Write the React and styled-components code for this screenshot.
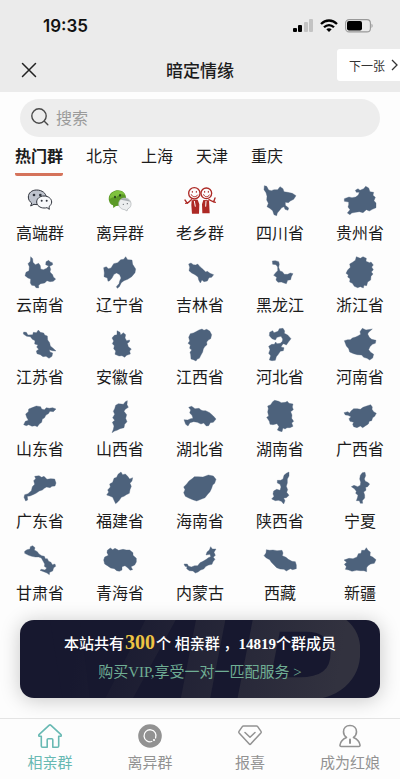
import React from 'react';
import styled, { createGlobalStyle } from 'styled-components';

const GlobalStyle = createGlobalStyle`
  * { box-sizing: border-box; }
  body {
    margin: 0;
    background: #fff;
    font-family: "Noto Sans CJK SC", sans-serif;
    color: #1c1c1c;
  }
  button, input { font: inherit; color: inherit; }
  button { border: 0; padding: 0; background: none; cursor: pointer; }
  svg { display: block; flex: none; }
`;

const Page = styled.div`
  margin-right: 6px;
  min-height: 100vh;
  display: flex;
  flex-direction: column;
  background: #fdfdfd;
`;

const Header = styled.header`
  background: #ebebeb;
`;

const StatusBar = styled.div`
  display: flex;
  align-items: center;
  justify-content: space-between;
  height: 48px;
  padding: 4px 27px 0 43px;
`;

const Clock = styled.time`
  font: 600 17px/24px Inter, sans-serif;
  color: #111;
`;

const StatusIcons = styled.div`
  display: flex;
  align-items: center;
  gap: 7px;
`;

const TitleBar = styled.div`
  display: grid;
  grid-template-columns: 1fr auto 1fr;
  align-items: center;
  height: 44px;
`;

const CloseButton = styled.button`
  justify-self: start;
  padding: 0 20px;
`;

const Title = styled.h1`
  margin: 0;
  font-size: 17px;
  line-height: 24px;
  font-weight: 500;
`;

const NextButton = styled.button`
  display: flex;
  align-items: center;
  justify-content: space-between;
  justify-self: end;
  align-self: start;
  width: 63px;
  height: 32px;
  margin-top: 1px;
  padding: 0 1px 0 12px;
  border-radius: 3px 0 0 3px;
  background: #fff;
  font-size: 12px;
  color: #333;
`;

const Main = styled.main`
  flex: 1;
  padding-top: 7px;
`;

const SearchBox = styled.label`
  display: flex;
  align-items: center;
  gap: 7px;
  height: 38px;
  margin: 0 20px;
  padding: 0 11px 2px;
  border-radius: 19px;
  background: #ededed;
`;

const SearchInput = styled.input`
  flex: 1;
  min-width: 0;
  border: 0;
  padding: 0;
  outline: 0;
  background: none;
  font-size: 16px;
  line-height: 24px;
  &::placeholder { color: #9b9b9b; opacity: 1; }
`;

const Tabs = styled.div`
  display: flex;
  gap: 23px;
  margin-top: 6px;
  padding: 0 15px;
`;

const Tab = styled.button`
  padding-bottom: 6px;
  border-bottom: 3px solid ${(p) => (p.$active ? '#d5735b' : 'transparent')};
  border-radius: 2px;
  font-size: 16px;
  line-height: 24px;
  font-weight: ${(p) => (p.$active ? 700 : 400)};
`;

const Grid = styled.div`
  display: grid;
  grid-template-columns: repeat(5, 1fr);
  row-gap: 12px;
  margin-top: 8px;
`;

const Group = styled.a`
  display: flex;
  flex-direction: column;
  align-items: center;
  gap: 4px;
  color: inherit;
  text-decoration: none;
  font-size: 16px;
  line-height: 24px;
`;

const Banner = styled.a`
  position: relative;
  display: flex;
  flex-direction: column;
  align-items: center;
  margin: 16px 20px 20px;
  padding: 10px 0 12px;
  border-radius: 14px;
  background: #17182f;
  box-shadow: 0 2px 20px rgba(0, 0, 0, 0.22);
  overflow: hidden;
  color: #fff;
  text-decoration: none;
  font-family: "Liberation Serif", "Noto Sans CJK SC", serif;
  font-size: 15px;
`;

const Watermark = styled.span`
  position: absolute;
  right: 20px;
  top: -16px;
  font: italic 700 204px/150px "Liberation Sans", sans-serif;
  background: linear-gradient(100deg, #17182f 15%, #32323f 90%);
  background-clip: text;
  color: transparent;
  pointer-events: none;
`;

const BannerLine = styled.span`
  position: relative;
  line-height: 28px;
  font-weight: 500;
  white-space: pre;
`;

const Count = styled.strong`
  padding: 0 1px;
  font-size: 20px;
  line-height: 20px;
  color: #edc443;
`;

const BannerLink = styled.span`
  position: relative;
  line-height: 28px;
  color: #6fae94;
`;

const BottomNav = styled.nav`
  display: grid;
  grid-template-columns: repeat(4, 1fr);
  padding: 5px 0 7px;
  border-top: 1px solid #e4e4e4;
`;

const NavItem = styled.a`
  display: flex;
  flex-direction: column;
  align-items: center;
  gap: 4px;
  font-size: 15px;
  line-height: 20px;
  text-decoration: none;
  color: ${(p) => (p.$active ? '#68b9b3' : '#929292')};
`;

const provinces = [
  ['四川省', '183 27', '184,32 191,34 197,45 205,47 213,44 224,44 231,35 240,41 243,50 254,52 268,55 279,62 272,73 262,78 256,83 247,82 247,91 257,99 255,106 246,103 243,95 236,98 230,106 223,114 221,122 213,119 209,107 200,100 192,95 196,85 191,75 192,64 189,53 183,44'],
  ['贵州省', '423 27', '457,46 465,41 471,46 482,41 488,34 497,39 501,50 512,52 510,61 517,67 513,77 519,84 519,98 508,103 499,108 490,104 480,113 469,110 458,112 446,114 441,119 433,114 441,104 435,96 437,89 437,81 424,79 424,71 438,66 447,68 458,66 466,60 469,52 460,52'],
  ['云南省', '72 18', '92,20 98,26 99,37 106,44 116,40 121,47 122,57 130,59 140,55 146,48 137,44 138,35 146,31 151,36 157,38 158,44 149,49 152,58 150,66 158,74 160,81 167,87 160,94 150,95 141,92 134,99 122,101 116,106 116,114 108,113 104,107 95,106 91,99 92,87 84,84 75,77 78,67 87,62 88,50 84,41 91,34'],
  ['辽宁省', '312 18', '377,20 383,29 396,30 398,43 407,57 405,68 395,80 383,88 372,92 364,98 358,110 352,115 349,110 357,101 359,93 363,84 359,74 350,69 342,73 336,84 329,92 324,94 322,84 312,80 313,69 311,53 319,50 325,56 333,54 341,41 353,38 362,29 371,28'],
  ['吉林省', '552 18', '566,42 573,39 580,44 587,45 593,42 600,50 609,58 617,66 622,64 630,70 641,74 635,82 627,83 622,93 612,95 606,90 601,99 596,90 594,81 585,74 575,69 567,62 569,52'],
  ['黑龙江', '183 18', '208,33 217,32 227,35 229,43 227,52 231,63 238,65 244,73 254,73 262,69 270,71 265,80 263,89 254,91 250,101 243,99 235,96 225,97 219,90 221,82 212,76 218,68 224,62 224,51 219,44 209,43'],
  ['浙江省', '423 18', '460,20 472,25 480,20 490,25 489,34 500,38 504,36 511,45 506,51 511,59 505,66 510,72 504,79 503,90 494,96 491,107 483,106 481,114 472,110 464,113 454,109 448,100 440,96 441,86 434,81 436,75 429,70 434,60 442,52 440,42 450,36 457,31'],
  ['江苏省', '72 234', '71,246 79,247 84,255 98,254 100,247 109,248 115,240 121,247 131,249 134,255 142,258 143,270 149,278 151,288 161,296 168,303 157,302 148,299 150,306 158,309 156,319 147,325 138,319 129,320 121,314 111,311 109,303 116,298 110,291 114,285 104,282 105,272 97,268 91,260 80,259 70,252'],
  ['安徽省', '312 234', '351,242 360,247 362,255 370,248 377,254 375,264 380,272 389,270 388,276 382,280 385,290 394,297 389,303 391,312 380,316 374,322 366,317 357,318 345,313 347,303 341,296 343,287 337,281 341,273 336,264 343,256 351,254'],
  ['江西省', '552 234', '566,262 571,251 580,249 586,246 597,240 606,237 612,241 620,238 629,243 635,254 632,266 626,269 620,276 621,284 614,290 610,297 608,306 603,315 598,325 592,327 588,333 580,329 573,327 572,314 570,307 575,300 569,295 571,285 564,280 569,273'],
  ['河北省', '183 234', '200,247 209,242 213,248 225,244 229,236 240,235 245,243 244,250 254,255 264,266 258,274 250,285 242,281 238,284 234,291 243,293 241,302 232,304 226,313 220,320 217,331 207,332 199,330 203,317 197,310 201,299 197,289 206,283 214,283 218,276 222,281 232,280 238,274 239,267 234,259 222,262 217,270 207,266 199,257'],
  ['河南省', '423 234', '478,235 489,240 508,237 497,247 494,252 499,262 506,268 519,271 517,280 508,283 501,290 497,299 503,307 512,313 509,324 500,330 492,325 482,322 476,315 463,314 452,311 440,306 437,296 430,288 424,272 434,269 442,269 448,264 458,261 466,257 473,253 471,245'],
  ['山东省', '72 15', '99,37 109,33 122,35 125,42 133,44 139,38 148,40 158,38 168,42 160,50 150,49 145,56 138,60 133,69 127,72 125,82 118,87 112,95 105,92 96,94 86,89 79,92 71,89 76,79 85,76 80,67 77,57 85,50 86,42'],
  ['山西省', '312 15', '376,20 382,17 381,29 385,37 376,43 372,49 380,59 377,70 381,80 374,88 372,98 360,101 351,106 344,108 336,113 340,103 342,93 337,82 344,76 338,68 344,58 340,49 344,41 347,31 355,26 364,27 370,28'],
  ['湖北省', '552 15', '566,37 575,34 585,41 597,40 603,45 609,47 617,47 629,53 640,63 648,72 640,82 631,83 626,92 619,93 611,84 603,87 592,82 581,80 570,83 564,93 557,88 552,74 563,75 572,71 579,70 576,61 569,54 572,45'],
  ['湖南省', '183 15', '209,20 215,16 227,19 235,23 247,22 253,19 258,25 270,27 268,36 271,44 263,50 267,60 266,70 272,79 266,84 270,94 261,98 252,98 246,102 240,99 237,110 229,108 223,105 228,95 222,86 210,89 201,88 199,79 191,67 197,63 194,51 196,41 194,33 203,29'],
  ['广西省', '423 15', '423,53 434,50 440,54 444,48 452,41 463,41 472,43 480,37 491,33 503,29 508,36 507,43 512,50 520,55 515,64 509,68 506,77 499,79 496,87 488,92 479,98 472,93 462,98 452,95 449,88 452,82 441,79 438,71 444,65 435,61 427,60'],
  ['广东省', '72 231', '117,242 125,247 132,244 141,253 152,251 164,252 168,264 165,273 156,274 150,278 140,276 133,280 127,285 118,288 108,295 99,299 90,303 82,304 83,315 77,318 72,307 74,299 84,296 94,287 97,275 104,268 101,257 107,251 104,244'],
  ['福建省', '312 231', '363,231 368,239 376,237 383,244 389,252 398,248 396,258 390,265 394,274 390,284 388,295 379,299 372,304 364,307 358,316 354,320 347,326 342,316 338,307 329,303 320,300 326,291 323,285 331,276 329,267 338,262 342,250 350,247 354,238'],
  ['海南省', '552 231', '594,245 609,246 625,240 640,243 648,253 644,265 638,270 635,280 630,290 622,299 615,308 605,312 590,318 578,314 566,309 556,304 551,293 555,284 551,276 560,267 567,258 578,250 583,245'],
  ['陕西省', '183 231', '258,231 258,243 253,252 253,264 250,274 254,284 251,292 258,301 250,308 242,309 246,317 242,327 235,319 226,316 217,317 206,312 213,304 210,297 212,288 221,283 231,286 234,276 231,268 223,264 223,256 233,256 240,252 243,241 250,235'],
  ['宁夏', '423 231', '478,233 486,232 488,242 484,252 487,259 494,262 500,267 494,275 488,277 489,286 482,291 485,300 485,309 478,317 479,325 472,325 469,317 460,317 463,309 465,301 458,295 460,289 454,281 445,275 453,271 464,275 472,271 473,262 470,252 472,241'],
  ['甘肃省', '72 27', '98,32 105,38 103,45 112,50 117,57 125,62 133,64 136,71 142,71 146,79 153,82 157,89 165,87 167,94 161,98 158,108 149,112 148,119 141,114 131,110 120,106 124,103 135,105 140,99 133,94 134,87 129,78 124,69 116,66 106,66 95,64 86,61 74,55 74,49 81,44 90,42 91,35'],
  ['青海省', '312 27', '322,46 331,39 338,44 345,40 356,46 369,43 379,45 389,45 399,53 399,61 409,70 409,81 404,90 393,95 398,104 390,106 384,99 375,92 366,95 366,105 358,109 350,107 343,101 332,99 322,92 314,87 311,75 314,66 325,61 321,53'],
  ['内蒙古', '552 27', '552,87 562,87 565,93 574,96 584,92 593,92 600,83 609,79 619,73 625,68 632,65 630,58 618,60 621,51 628,45 632,35 637,42 648,42 642,52 646,61 640,67 645,73 639,80 636,88 626,90 618,94 611,102 602,105 594,111 586,114 579,108 568,107 560,101 561,95 555,94'],
  ['西藏', '183 27', '190,44 200,46 210,45 222,47 237,46 240,54 238,62 249,67 256,73 267,79 277,80 280,90 280,101 269,104 262,101 250,108 243,103 231,102 221,98 213,90 205,82 200,74 190,69 183,62 189,54'],
  ['新疆', '423 27', '476,46 485,46 490,38 495,46 502,51 501,62 509,66 519,74 514,85 503,87 495,92 491,98 491,110 483,107 472,107 461,106 447,109 437,105 427,103 430,95 424,88 431,82 423,75 438,70 450,71 462,66 466,56 474,55'],
];

const ProvinceShape = ({ origin, points }) => (
  <svg width="32" height="32" viewBox={`${origin} 96 96`} overflow="visible" aria-hidden="true">
    <polygon points={points} fill="#4d627c" stroke="#4d627c" strokeWidth="1" strokeLinejoin="round" />
  </svg>
);

const GrayChat = () => (
  <svg width="32" height="32" viewBox="72 27 96 96" aria-hidden="true">
    <g stroke="#30343d" strokeWidth="3" strokeLinejoin="round">
      <path d="M110 45C95 45 85 54 85 66c0 8 4 14 10 18l-3 9 10-5c15 3 35-2 37-20 0-13-13-23-29-23Z" fill="#bfc4ce" />
      <path d="M132 63c-13 0-22 8-22 18s10 18 22 18c3 0 6 0 9-1l7 5-1-8c5-4 8-9 8-14 0-10-10-18-23-18Z" fill="#f8f9fb" />
    </g>
    <g fill="#30343d">
      <circle cx="102" cy="60" r="4" />
      <circle cx="121" cy="60" r="4" />
      <circle cx="125" cy="77" r="3" />
      <circle cx="140" cy="77" r="3" />
    </g>
  </svg>
);

const GreenChat = () => (
  <svg width="32" height="32" viewBox="312 27 96 96" aria-hidden="true">
    <path d="M345 47c-14 4-21 17-18 30 2 8 6 12 12 14l1 8 8-6c15 1 31-10 30-26-1-16-17-25-33-20Z" fill="#5c9a27" />
    <path d="M346 49c11-4 24 0 29 11-10-5-21 0-26 7-6-2-15 1-20 5-1-10 6-20 17-23Z" fill="#7fc23e" />
    <path d="M374 69c-11 0-18 8-18 18 0 9 8 16 18 17l7 4 2-6c7-3 11-9 10-17-1-9-8-16-19-16Z" fill="#eceeef" stroke="#a9aeb1" strokeWidth="2" />
    <path d="M362 74c9-8 23-4 29 6-8-2-17-4-29-6Z" fill="#a9afb2" />
    <g fill="#28451d">
      <ellipse cx="345" cy="66" rx="3" ry="4" />
      <ellipse cx="360" cy="61" rx="3" ry="4" />
    </g>
    <g fill="#666c70">
      <circle cx="370" cy="88" r="2" />
      <circle cx="382" cy="86" r="2" />
    </g>
  </svg>
);

const CouplePeople = () => (
  <svg width="32" height="32" viewBox="552 27 96 96" aria-hidden="true">
    <g fill="none" stroke="#ad2925" strokeWidth="4" strokeLinecap="round" strokeLinejoin="round">
      <circle cx="583" cy="55" r="17" />
      <circle cx="619" cy="55" r="16" />
      <path d="M574 59c3 8 14 9 19 1M611 59c3 8 13 9 17 1M577 49v3M589 49v3M614 49v3M625 49v3" strokeWidth="3" />
      <path d="M574 74l-12 11-7-10M566 82l-9 3M627 74l14 7 4-12M639 79l7 3" />
    </g>
    <path d="M575 76l18-2 5 14-1 28h-21l-2-26ZM610 75l17 1 2 39h-22l-1-27Z" fill="#ad2925" />
    <path d="M583 78l3 17M618 78l-1 17" stroke="#fff" strokeWidth="3" />
  </svg>
);

const specialGroups = [
  ['高端群', GrayChat],
  ['离异群', GreenChat],
  ['老乡群', CouplePeople],
];

const line = { fill: 'none', stroke: 'currentColor', strokeLinecap: 'round', strokeLinejoin: 'round' };

const HomeIcon = () => (
  <svg width="24" height="24" viewBox="0 0 24 24" {...line} strokeWidth="1.6" aria-hidden="true">
    <path d="M11 1.300 1 10.700c-.7.8-.2 1.600.8 1.600h1.500v9.600c0 .8.5 1.300 1.300 1.300h4.600v-7.500c0-.7.4-1 1-1h3.600c.6 0 1 .3 1 1v7.500h4.600c.8 0 1.300-.5 1.300-1.300v-9.600h1.500c1 0 1.500-.8.8-1.600L13 1.300c-.7-.6-1.300-.6-2 0Z" />
  </svg>
);

const DiscIcon = () => (
  <svg width="24" height="24" viewBox="0 0 24 24" aria-hidden="true">
    <circle cx="12" cy="12" r="11.8" fill="currentColor" />
    <path d="M13.800 17.500A6 6 0 1 1 17.600 14" fill="none" stroke="#fff" strokeWidth="1.300" strokeLinecap="round" />
    <circle cx="16" cy="16" r="1.100" fill="#fff" />
  </svg>
);

const DiamondIcon = () => (
  <svg width="24" height="24" viewBox="0 0 24 24" {...line} strokeWidth="1.500" aria-hidden="true">
    <path d="M5.500 2h13c.5 0 .9.2 1.200.6l3.300 4.800c.4.5.3 1-.1 1.500L12.700 20c-.4.5-1 .5-1.400 0L1.100 8.900c-.4-.5-.5-1-.1-1.500l3.300-4.800c.3-.4.7-.6 1.200-.6Z" />
    <path d="m7 8.500 5 4.700 5-4.700" />
  </svg>
);

const PersonIcon = () => (
  <svg width="24" height="24" viewBox="0 0 24 24" {...line} strokeWidth="1.600" aria-hidden="true">
    <path d="M12 1.500c-4 0-6.500 2.700-6.500 6.300 0 2.500 1.200 4.400 3 5.700-3.500 1.500-6 3.500-6.500 7.500-.1 1 .3 1.500 1.200 1.500h17.600c.9 0 1.300-.5 1.200-1.500-.5-4-3-6-6.500-7.500 1.800-1.300 3-3.200 3-5.700 0-3.600-2.500-6.300-6.500-6.300Z" />
    <path d="M12 15.500v3.500" strokeWidth="2" />
  </svg>
);

const navItems = [
  ['相亲群', HomeIcon],
  ['离异群', DiscIcon],
  ['报喜', DiamondIcon],
  ['成为红娘', PersonIcon],
];

export default function App() {
  return (
    <>
      <GlobalStyle />
      <Page>
        <Header>
          <StatusBar>
            <Clock>19:35</Clock>
            <StatusIcons>
              <svg width="20" height="14" viewBox="0 0 20 14" aria-hidden="true">
                <rect x="0" y="9" width="4" height="4" rx="1" fill="#000" />
                <rect x="5" y="6" width="4" height="7" rx="1" fill="#000" />
                <rect x="11" y="3" width="4" height="10" rx="1" fill="#c3c3c3" />
                <rect x="16" y="0" width="4" height="13" rx="1" fill="#c3c3c3" />
              </svg>
              <svg width="18" height="14" viewBox="0 0 18 14" fill="none" stroke="#000" strokeWidth="2.300" aria-hidden="true">
                <path d="M1 5c4.600-4.700 11.400-4.700 16 0M4 8.300c3-3 7-3 10 0" />
                <path d="M6.300 10.300c1.600-1.400 3.800-1.400 5.400 0L9 13Z" fill="#000" stroke="none" />
              </svg>
              <svg width="28" height="14" viewBox="0 0 28 14" aria-hidden="true">
                <rect x=".6" y=".6" width="24.800" height="12.300" rx="3.500" fill="none" stroke="#999" strokeWidth="1.100" />
                <rect x="2" y="2" width="15" height="9.500" rx="2" fill="#000" />
                <path d="M26.500 4.800c1.500.6 1.500 3.500 0 4.200Z" fill="#999" />
              </svg>
            </StatusIcons>
          </StatusBar>
          <TitleBar>
            <CloseButton aria-label="关闭">
              <svg width="18" height="18" viewBox="0 0 18 18" stroke="#222" strokeWidth="1.500" strokeLinecap="round" aria-hidden="true">
                <path d="m2.500 2.500 13 13M15.500 2.500l-13 13" />
              </svg>
            </CloseButton>
            <Title>暗定情缘</Title>
            <NextButton>
              下一张
              <svg width="9" height="12" viewBox="0 0 9 12" fill="none" stroke="#333" strokeWidth="1.300" aria-hidden="true">
                <path d="m2 1 5 5-5 5" />
              </svg>
            </NextButton>
          </TitleBar>
        </Header>

        <Main>
          <SearchBox>
            <svg width="18" height="18" viewBox="0 0 18 18" fill="none" stroke="#4a4a4a" strokeWidth="1.400" strokeLinecap="round" aria-hidden="true">
              <circle cx="8" cy="8" r="7.200" />
              <path d="m13.300 13.300 3.500 3.500" />
            </svg>
            <SearchInput type="text" placeholder="搜索" aria-label="搜索" />
          </SearchBox>

          <Tabs role="tablist">
            {['热门群', '北京', '上海', '天津', '重庆'].map((name, i) => (
              <Tab key={name} role="tab" aria-selected={i === 0} $active={i === 0}>{name}</Tab>
            ))}
          </Tabs>

          <Grid>
            {specialGroups.map(([name, Icon]) => (
              <Group key={name} href="#"><Icon />{name}</Group>
            ))}
            {provinces.map(([name, origin, points]) => (
              <Group key={name} href="#"><ProvinceShape origin={origin} points={points} />{name}</Group>
            ))}
          </Grid>

          <Banner href="#">
            <Watermark aria-hidden="true">VIP</Watermark>
            <BannerLine>本站共有<Count>300</Count>个 相亲群 ，<strong>14819</strong>个群成员</BannerLine>
            <BannerLink>购买VIP,享受一对一匹配服务 &gt;</BannerLink>
          </Banner>
        </Main>

        <BottomNav>
          {navItems.map(([name, Icon], i) => (
            <NavItem key={name} href="#" $active={i === 0}><Icon />{name}</NavItem>
          ))}
        </BottomNav>
      </Page>
    </>
  );
}
